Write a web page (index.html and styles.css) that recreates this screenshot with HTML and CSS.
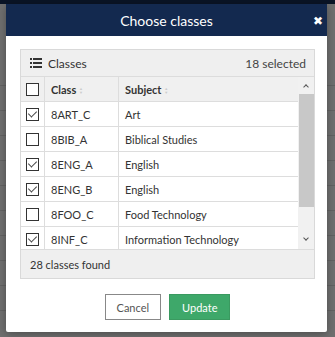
FILE: index.html
```html
<!DOCTYPE html>
<html lang="en">
<head>
    <meta charset="UTF-8">
    <title>Choose classes</title>
    <link rel="stylesheet" href="styles.css">
</head>
<body>

<div class="page">
    <div class="topbar"></div>
    <div class="page-rows">
        <div class="page-row"></div>
        <div class="page-row"></div>
        <div class="page-row"></div>
        <div class="page-row"></div>
        <div class="page-row"></div>
        <div class="page-row"></div>
        <div class="page-row"></div>
        <div class="page-row"></div>
        <div class="page-row"></div>
        <div class="page-row"></div>
    </div>
    <div class="page-buttons">
        <span class="page-btn"></span>
        <span class="page-btn wide"></span>
    </div>
</div>

<div class="modal">
    <div class="modal-header">
        <h2>Choose classes</h2>
        <span class="close">&#10006;</span>
    </div>
    <div class="modal-body">
        <div class="panel">
            <div class="panel-heading">
                <span class="panel-title">
                    <svg width="12" height="10" viewBox="0 0 12 10">
                        <rect x="0" y="0" width="2" height="2" fill="#333"/>
                        <rect x="3" y="0" width="9" height="2" fill="#333"/>
                        <rect x="0" y="4" width="2" height="2" fill="#333"/>
                        <rect x="3" y="4" width="9" height="2" fill="#333"/>
                        <rect x="0" y="8" width="2" height="2" fill="#333"/>
                        <rect x="3" y="8" width="9" height="2" fill="#333"/>
                    </svg>
                    Classes
                </span>
                <span class="count">18 selected</span>
            </div>
            <div class="table-wrap">
                <div class="table-scroll">
                    <table>
                        <thead>
                            <tr>
                                <th class="chk"><span class="box"></span></th>
                                <th class="col-class">Class <span class="sort">&#9650;<br>&#9660;</span></th>
                                <th>Subject <span class="sort">&#9650;<br>&#9660;</span></th>
                            </tr>
                        </thead>
                        <tbody>
                            <tr><td class="chk"><span class="box on"></span></td><td>8ART_C</td><td>Art</td></tr>
                            <tr><td class="chk"><span class="box"></span></td><td>8BIB_A</td><td>Biblical Studies</td></tr>
                            <tr><td class="chk"><span class="box on"></span></td><td>8ENG_A</td><td>English</td></tr>
                            <tr><td class="chk"><span class="box on"></span></td><td>8ENG_B</td><td>English</td></tr>
                            <tr><td class="chk"><span class="box"></span></td><td>8FOO_C</td><td>Food Technology</td></tr>
                            <tr><td class="chk"><span class="box on"></span></td><td>8INF_C</td><td>Information Technology</td></tr>
                        </tbody>
                    </table>
                </div>
                <div class="scrollbar">
                    <span class="arrow up"></span>
                    <span class="thumb"></span>
                    <span class="arrow down"></span>
                </div>
            </div>
            <div class="panel-footer">28 classes found</div>
        </div>
        <div class="actions">
            <button class="btn">Cancel</button>
            <button class="btn btn-primary">Update</button>
        </div>
    </div>
</div>

</body>
</html>
```

FILE: styles.css
```css
/* General Styling */
body {
    margin: 0;
    font-family: Lato, "Open Sans", Arial, sans-serif;
    font-size: 11px;
    color: #333;
    background-color: #6f6f6f;
    width: 335px;
    height: 337px;
    overflow: hidden;
    position: relative;
}

/* dimmed page behind the dialog */
.page {
    height: 337px;
}
.topbar {
    height: 4px;
    background-color: #0a1426;
}
.page-rows {
    padding-top: 57px;
}
.page-row {
    height: 24px;
    border-bottom: 1px solid #626262;
}
.page-buttons {
    display: flex;
    gap: 8px;
    padding-left: 82px;
    margin-top: 8px;
}
.page-btn {
    width: 56px;
    height: 10px;
    background-color: #1f4d2f;
}
.page-btn.wide {
    width: 84px;
}

/* dialog */
.modal {
    position: absolute;
    left: 6px;
    top: 4px;
    width: 321px;
    height: 328px;
    background-color: #fff;
    border-radius: 2px;
    box-shadow: 0 2px 8px rgba(0,0,0,0.3);
}
.modal-header {
    height: 32px;
    background-color: #13294f;
    display: flex;
    align-items: center;
    justify-content: center;
    position: relative;
}
.modal-header h2 {
    margin: 0;
    font-size: 14px;
    font-weight: normal;
    color: #fff;
}
.close {
    position: absolute;
    right: 4px;
    top: 10px;
    color: #fff;
    font-size: 12px;
    font-weight: bold;
    font-family: "DejaVu Sans", sans-serif;
}
.modal-body {
    padding: 13px 12px 0 14px;
}

.panel {
    border: 1px solid #d9d9d9;
    background-color: #efefef;
}
.panel-heading {
    height: 26px;
    display: flex;
    align-items: center;
    justify-content: space-between;
    padding: 0 8px 0 9px;
    font-size: 12px;
    border-bottom: 1px solid #dcdcdc;
}
.panel-title {
    display: flex;
    align-items: center;
    gap: 6px;
}
.count {
    color: #444;
}

.table-wrap {
    display: flex;
    height: 172px;
    background-color: #fff;
    overflow: hidden;
    border-bottom: 1px solid #dcdcdc;
}
.table-scroll {
    flex: 1;
}
table {
    width: 100%;
    border-collapse: collapse;
}
th, td {
    height: 24px;
    padding: 0 6px;
    text-align: left;
    border-right: 1px solid #ddd;
    border-bottom: 1px solid #ddd;
    white-space: nowrap;
}
th {
    background-color: #f0f0f0;
    font-weight: bold;
    color: #333;
}
td:last-child, th:last-child {
    border-right: none;
}
.chk {
    width: 9px;
    padding: 0 5px;
}
.col-class {
    width: 61px;
}
.box {
    display: block;
    width: 11px;
    height: 11px;
    border: 1px solid #333;
    background-color: #fff;
    position: relative;
}
.box.on::after {
    content: "";
    position: absolute;
    left: 3px;
    top: 0px;
    width: 4px;
    height: 7px;
    border-right: 1px solid #444;
    border-bottom: 1px solid #444;
    transform: rotate(45deg);
}
.sort {
    display: inline-block;
    font-size: 4px;
    line-height: 4px;
    color: #ccc;
    vertical-align: middle;
}

.scrollbar {
    width: 16px;
    background-color: #f1f1f1;
    display: flex;
    flex-direction: column;
    align-items: center;
}
.arrow {
    height: 17px;
    width: 16px;
    position: relative;
}
.arrow::after {
    content: "";
    position: absolute;
    left: 6px;
    width: 3px;
    height: 3px;
    border-left: 1.5px solid #555;
    border-top: 1.5px solid #555;
}
.arrow.up::after {
    top: 8px;
    transform: rotate(45deg);
}
.arrow.down {
    margin-top: auto;
}
.arrow.down::after {
    top: 4px;
    transform: rotate(225deg);
}
.thumb {
    width: 15px;
    height: 113px;
    background-color: #c8c8c8;
}

.panel-footer {
    height: 28px;
    display: flex;
    align-items: center;
    padding-left: 9px;
}

.actions {
    display: flex;
    justify-content: center;
    gap: 8px;
    margin-top: 15px;
}
.btn {
    font-family: Lato, "Open Sans", Arial, sans-serif;
    font-size: 11px;
    height: 26px;
    padding: 0 11px;
    border: 1px solid #888;
    background-color: #fff;
    color: #555;
}
.btn-primary {
    background-color: #3ea86a;
    border-color: #3a9a60;
    color: #fff;
    padding: 0 12px;
}
```
